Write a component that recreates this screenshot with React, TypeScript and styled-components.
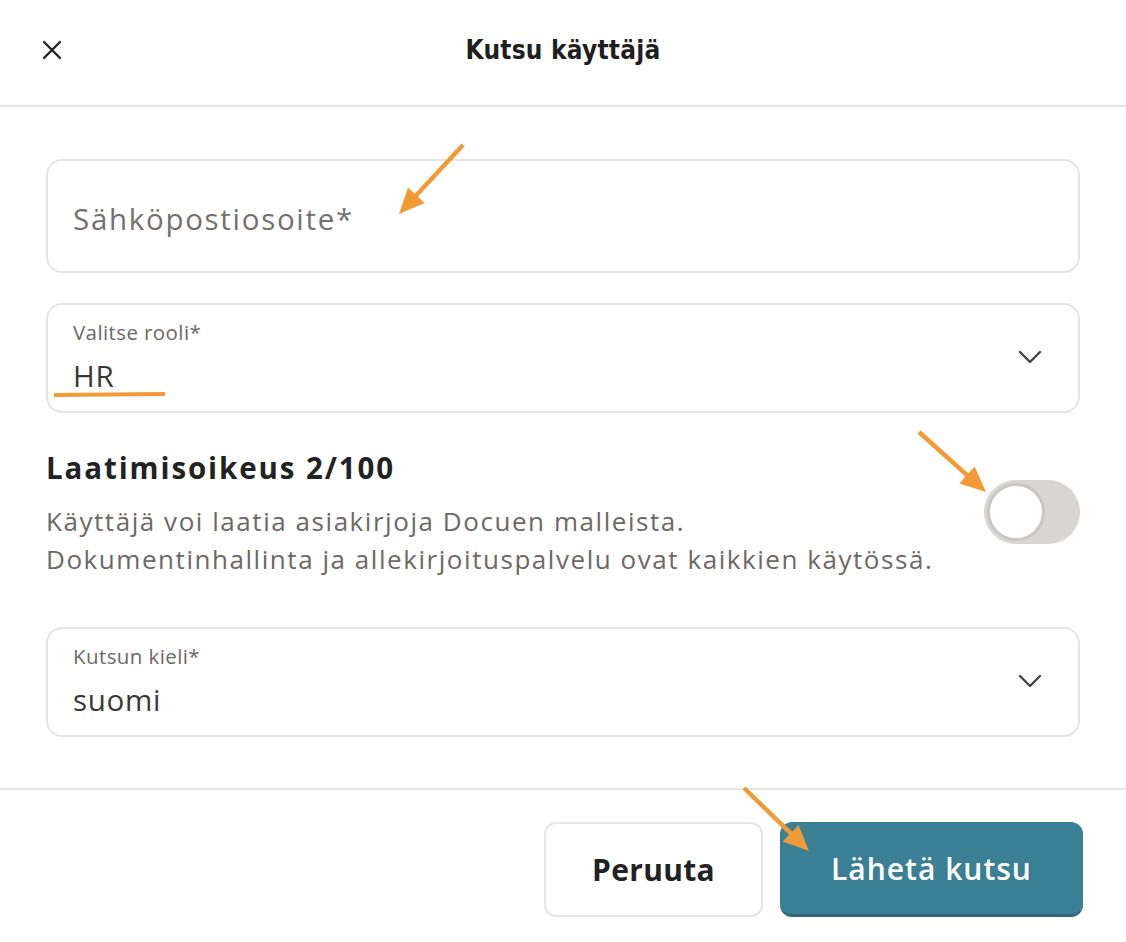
import React from "react";
import styled, { createGlobalStyle } from "styled-components";

const Global = createGlobalStyle`
  html, body { margin: 0; padding: 0; background: #ffffff; }
  body { font-family: "Open Sans", "Noto Sans", sans-serif; color: #222; }
  * { box-sizing: border-box; }
`;

const Dialog = styled.div`
  position: relative;
  width: 1126px;
  height: 942px;
  display: flex;
  flex-direction: column;
  background: #fff;
  overflow: hidden;
`;

const Header = styled.header`
  height: 107px;
  display: grid;
  grid-template-columns: 1fr auto 1fr;
  align-items: center;
  border-bottom: 2px solid #e6e6e6;
  padding: 0 38px 6px;
`;

const CloseButton = styled.button`
  justify-self: start;
  width: 28px;
  height: 28px;
  padding: 0;
  border: none;
  background: transparent;
  display: flex;
  align-items: center;
  justify-content: center;
  color: #222;
  cursor: pointer;
`;

const Title = styled.h1`
  margin: 0;
  font-family: "DejaVu Sans Condensed", "Liberation Sans Narrow", "Lato", sans-serif;
  font-weight: 700;
  font-size: 26px;
  letter-spacing: 0.2px;
  color: #1f1f1f;
`;

const Body = styled.main`
  display: flex;
  flex-direction: column;
  padding: 52px 46px 51px;
  border-bottom: 2px solid #e6e6e6;
`;

const Field = styled.div<{ $h: number; $mt?: number }>`
  height: ${(p) => p.$h}px;
  margin-top: ${(p) => p.$mt ?? 0}px;
  border: 2px solid #e4e4e4;
  border-radius: 16px;
  display: flex;
  align-items: center;
  padding: 0 36px 0 25px;
`;

const Placeholder = styled.span`
  font-size: 29.5px;
  letter-spacing: 1.7px;
  color: #75706c;
  padding-top: 5px;
`;

const FieldText = styled.div`
  flex: 1;
  align-self: stretch;
  display: flex;
  flex-direction: column;
  gap: 12px;
  padding-top: 14px;
`;

const Label = styled.span`
  font-size: 20.5px;
  letter-spacing: 0.4px;
  color: #6d6864;
  line-height: 26px;
`;

const Value = styled.span`
  font-size: 29.5px;
  letter-spacing: 0.7px;
  color: #3b3734;
  line-height: 38px;
`;

const Chevron = styled.svg`
  width: 24px;
  height: 14px;
  flex: none;
  margin-top: -2px;
`;

const PermissionRow = styled.section`
  margin-top: 37px;
  display: flex;
  align-items: center;
  justify-content: space-between;
`;

const PermissionText = styled.div`
  display: flex;
  flex-direction: column;
`;

const PermissionTitle = styled.h2`
  margin: 0;
  font-size: 29.5px;
  font-weight: 700;
  line-height: 36px;
  letter-spacing: 1.9px;
  color: #222;
`;

const Description = styled.p`
  margin: 16px 0 0;
  font-size: 26px;
  letter-spacing: 1.55px;
  line-height: 38px;
  color: #6d6864;
`;

const Toggle = styled.button`
  width: 96px;
  height: 64px;
  border: none;
  border-radius: 32px;
  background: #d8d5d2;
  padding: 3px;
  display: flex;
  align-items: center;
  cursor: pointer;
  margin-top: -4px;
`;

const Knob = styled.span`
  width: 58px;
  height: 58px;
  border-radius: 50%;
  background: #fff;
  border: 3px solid #c9c6c3;
`;

const Footer = styled.footer`
  flex: 1;
  display: flex;
  justify-content: flex-end;
  align-items: flex-start;
  gap: 17px;
  padding: 32px 43px 0;
`;

const Button = styled.button<{ $primary?: boolean }>`
  height: 95px;
  border-radius: 12px;
  font-family: "Open Sans", "Noto Sans", sans-serif;
  font-size: 30px;
  letter-spacing: ${(p) => (p.$primary ? 1 : 0.3)}px;
  font-weight: ${(p) => (p.$primary ? 600 : 700)};
  cursor: pointer;
  background: ${(p) => (p.$primary ? "#3b7f95" : "#ffffff")};
  color: ${(p) => (p.$primary ? "#ffffff" : "#222")};
  border: ${(p) => (p.$primary ? "none" : "2px solid #e6e6e6")};
  border-bottom: ${(p) => (p.$primary ? "3px solid #2f6a7c" : "2px solid #e6e6e6")};
  width: ${(p) => (p.$primary ? 303 : 219)}px;
`;

const Annotation = styled.svg`
  position: absolute;
  left: 0;
  top: 0;
  width: 1126px;
  height: 942px;
  pointer-events: none;
`;

const ORANGE = "#f29b36";

function Arrow({ x1, y1, x2, y2 }: { x1: number; y1: number; x2: number; y2: number }) {
  const ang = Math.atan2(y2 - y1, x2 - x1);
  const len = 28;
  const spread = 0.42;
  const bx = x2 - Math.cos(ang) * len * 0.8;
  const by = y2 - Math.sin(ang) * len * 0.8;
  const p1 = [x2 - Math.cos(ang - spread) * len, y2 - Math.sin(ang - spread) * len];
  const p2 = [x2 - Math.cos(ang + spread) * len, y2 - Math.sin(ang + spread) * len];
  return (
    <g>
      <line x1={x1} y1={y1} x2={bx} y2={by} stroke={ORANGE} strokeWidth={4.5} strokeLinecap="butt" />
      <polygon points={`${x2},${y2} ${p1[0]},${p1[1]} ${p2[0]},${p2[1]}`} fill={ORANGE} />
    </g>
  );
}

const ChevronIcon = () => (
  <Chevron viewBox="0 0 24 14" fill="none">
    <polyline points="2,2 12,12 22,2" stroke="#444" strokeWidth="2.4" strokeLinecap="round" strokeLinejoin="round" />
  </Chevron>
);

export default function App() {
  return (
    <>
      <Global />
      <Dialog>
        <Header>
          <CloseButton aria-label="Sulje">
            <svg width="22" height="22" viewBox="0 0 22 22" fill="none">
              <path d="M3 3 L19 19 M19 3 L3 19" stroke="#222" strokeWidth="2.4" strokeLinecap="round" />
            </svg>
          </CloseButton>
          <Title>Kutsu käyttäjä</Title>
          <span />
        </Header>
        <Body>
          <Field $h={114}>
            <Placeholder>Sähköpostiosoite*</Placeholder>
          </Field>
          <Field $h={110} $mt={30}>
            <FieldText>
              <Label>Valitse rooli*</Label>
              <Value>HR</Value>
            </FieldText>
            <ChevronIcon />
          </Field>
          <PermissionRow>
            <PermissionText>
              <PermissionTitle>Laatimisoikeus 2/100</PermissionTitle>
              <Description>
                Käyttäjä voi laatia asiakirjoja Docuen malleista.
                <br />
                Dokumentinhallinta ja allekirjoituspalvelu ovat kaikkien käytössä.
              </Description>
            </PermissionText>
            <Toggle aria-label="Laatimisoikeus">
              <Knob />
            </Toggle>
          </PermissionRow>
          <Field $h={110} $mt={49}>
            <FieldText>
              <Label>Kutsun kieli*</Label>
              <Value>suomi</Value>
            </FieldText>
            <ChevronIcon />
          </Field>
        </Body>
        <Footer>
          <Button>Peruuta</Button>
          <Button $primary>Lähetä kutsu</Button>
        </Footer>
        <Annotation viewBox="0 0 1126 942">
          <Arrow x1={463} y1={145} x2={399} y2={214} />
          <Arrow x1={919} y1={432} x2={986} y2={492} />
          <Arrow x1={744} y1={788} x2={809} y2={851} />
          <line x1={54} y1={395} x2={165} y2={394} stroke={ORANGE} strokeWidth={4} />
        </Annotation>
      </Dialog>
    </>
  );
}
